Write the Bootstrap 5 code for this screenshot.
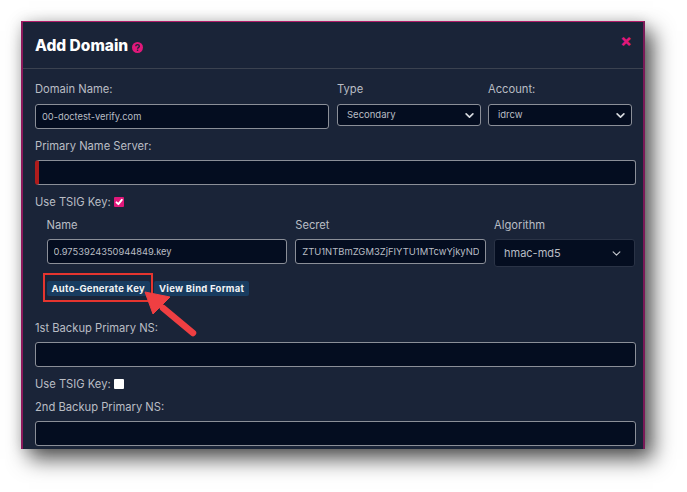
<!DOCTYPE html>
<html lang="en"><head><meta charset="utf-8"><title>Add Domain</title>
<link rel="stylesheet" href="https://cdn.jsdelivr.net/npm/bootstrap@5.3.0/dist/css/bootstrap.min.css">
<style>
html,body{height:100%;overflow:hidden;background:#fff}
body{font-family:Inter,"Liberation Sans",sans-serif;font-size:11.2px;color:#b9bdc4;padding:21px 0 0 21px}
.dlg{position:relative;width:624px;height:428px;background:#1a2438;border:0;border-left:2px solid #8a1a5c;border-right:2px solid #7a1a58;border-top:1px solid #b01c68;border-radius:0;overflow:visible;box-shadow:8px 10px 20px rgba(0,0,0,.68),0 0 12px rgba(0,0,0,.12)}
.dlg-head{height:47px;padding:0 12px;border-bottom:1px solid #3b4250;align-items:flex-start}
.dlg-title{font-size:15.5px;font-weight:800;color:#fff;margin:15px 0 0;line-height:17px}
.dlg-x{color:#e0187a;font-size:17px;font-weight:800;line-height:1;margin-top:10px;margin-right:-1px}
.dlg-body{height:380px;overflow:hidden;padding:13px 8px 0 12px}
.lbl{display:block;line-height:14px;margin:0 0 7px;color:#b9bdc4}
.lbl-first{margin-bottom:8px}
.lbl-next{margin-top:10px}
.lbl-after{margin-top:9px}
.field{background:#040d20;border:1px solid #8b8f98;border-radius:3px;color:#b9bdc4;font-size:9.3px;height:25px;padding:0 6px;box-shadow:none;line-height:1}
.field:focus{background:#040d20;color:#b9bdc4}
.secret{font-size:9.45px}
.pick{background-color:#040d20;border:1px solid #8b8f98;border-radius:3px;color:#b9bdc4;font-size:9.5px;height:22px;padding:0 6px 0 9px;background-size:11px 9px;background-position:right 5px center;background-image:url("data:image/svg+xml,%3csvg xmlns='http://www.w3.org/2000/svg' viewBox='0 0 16 16'%3e%3cpath fill='none' stroke='%23d5d8dd' stroke-linecap='round' stroke-linejoin='round' stroke-width='3' d='m2 5 6 6 6-6'/%3e%3c/svg%3e")}
.pick-big{height:28px;border-color:#2a3346;font-size:11px;padding-left:9px;background-position:right 12px center;width:141px;background-image:url("data:image/svg+xml,%3csvg xmlns='http://www.w3.org/2000/svg' viewBox='0 0 16 16'%3e%3cpath fill='none' stroke='%23c5c8ce' stroke-linecap='round' stroke-linejoin='round' stroke-width='2' d='m2 5 6 6 6-6'/%3e%3c/svg%3e")}
.c-dom{width:294px}.c-type{width:144px}.c-acct{width:144px;margin-left:-1px}
.gap8{gap:8px}
.wide{width:601px}
.alarm{border-left:4px solid #b01c1c}
.tick{appearance:none;display:inline-block;width:10px;height:10px;background:#fff;border-radius:1px;margin:0}
.tick-on{background:#e0187a url("data:image/svg+xml,%3csvg xmlns='http://www.w3.org/2000/svg' viewBox='0 0 16 16'%3e%3cpath fill='none' stroke='%23fff' stroke-width='3' stroke-linecap='round' stroke-linejoin='round' d='m4 8.5 3 3 5.5-7'/%3e%3c/svg%3e") center/100% no-repeat}
.tsig{line-height:14px;margin:10px 0 0;gap:3px}
.sub{padding-left:11.5px}
.keys{margin-top:9px}
.c-name{width:241px}.c-sec{width:191px}
.btnrow{margin-top:14px;gap:4px}
.act{background:#183c60;color:#f1f3f5;border:0;border-radius:2px;font-size:9.5px;font-weight:700;height:15px;line-height:15px;padding:0 5px;letter-spacing:.25px}
.act:hover{background:#183c60;color:#f1f3f5}
.lbl-b1{margin-top:25px}
.hilite{position:absolute;left:20px;top:251px;width:110px;height:29px;border:2px solid #e5352f;pointer-events:none}
.pointer{position:absolute;left:100px;top:268px;pointer-events:none}
</style></head>
<body>
<div class="modal-content dlg">
  <div class="modal-header d-flex justify-content-between dlg-head">
    <h5 class="modal-title dlg-title d-flex align-items-center gap-1">Add Domain
      <svg width="11" height="11" viewBox="0 0 16 16" class="mt-1"><circle cx="8" cy="8" r="8" fill="#e0187a"/><path d="M5.400 6.200C5.500 4.600 6.600 3.800 8 3.800s2.700.9 2.700 2.200c0 1.900-2.500 1.900-2.600 3.700" fill="none" stroke="#1a2438" stroke-width="2"/><circle cx="8.100" cy="12" r="1.200" fill="#1a2438"/></svg>
    </h5>
    <span class="dlg-x">×</span>
  </div>
  <div class="modal-body dlg-body">
    <div class="d-flex gap8">
      <div class="c-dom"><label class="lbl lbl-first">Domain Name:</label><input class="form-control field" value="00-doctest-verify.com"></div>
      <div class="c-type"><label class="lbl lbl-first">Type</label><select class="form-select pick"><option>Secondary</option></select></div>
      <div class="c-acct"><label class="lbl lbl-first">Account:</label><select class="form-select pick"><option>idrcw</option></select></div>
    </div>
    <label class="lbl lbl-next">Primary Name Server:</label>
    <input class="form-control field alarm wide">
    <p class="tsig d-flex align-items-center">Use TSIG Key: <input type="checkbox" class="tick tick-on" checked></p>
    <div class="d-flex gap8 sub keys">
      <div class="c-name"><label class="lbl">Name</label><input class="form-control field" value="0.9753924350944849.key"></div>
      <div class="c-sec"><label class="lbl">Secret</label><input class="form-control field secret" value="ZTU1NTBmZGM3ZjFIYTU1MTcwYjkyNDI"></div>
      <div><label class="lbl">Algorithm</label><select class="form-select pick pick-big"><option>hmac-md5</option></select></div>
    </div>
    <div class="d-flex sub btnrow">
      <button class="btn act">Auto-Generate Key</button>
      <button class="btn act">View Bind Format</button>
    </div>
    <label class="lbl lbl-b1">1st Backup Primary NS:</label>
    <input class="form-control field wide">
    <p class="tsig d-flex align-items-center">Use TSIG Key: <input type="checkbox" class="tick"></p>
    <label class="lbl lbl-after">2nd Backup Primary NS:</label>
    <input class="form-control field wide">
  </div>
  <div class="hilite"></div>
  <svg class="pointer" width="80" height="55" viewBox="0 0 80 55"><path d="M70 43 40 18" stroke="#ef3f42" stroke-width="6.500" stroke-linecap="round"/><path d="M22 2 47 7 30 24Z" fill="#ef3f42" stroke="#ef3f42" stroke-linejoin="round"/></svg>
</div>
</body></html>
